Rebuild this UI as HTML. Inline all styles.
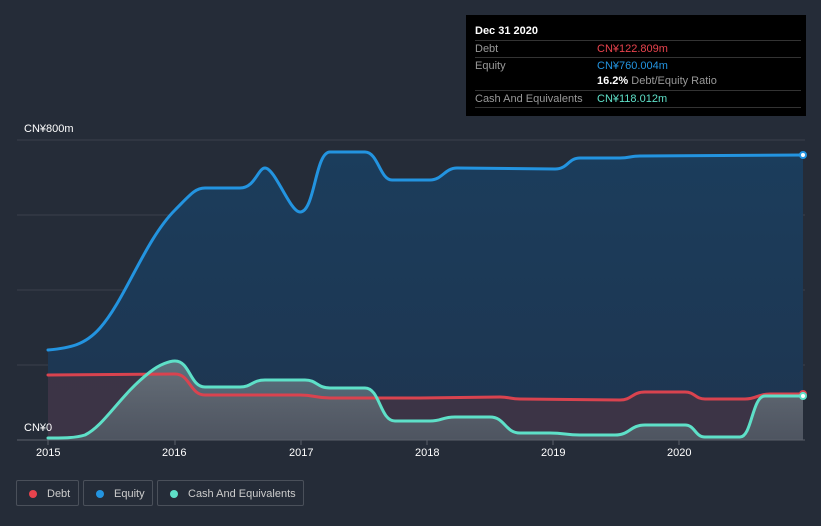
<!DOCTYPE html>
<html><head><style>
body{margin:0;width:821px;height:526px;background:#252c38;font-family:"Liberation Sans",sans-serif;overflow:hidden;position:relative}
.tt{position:absolute;left:466px;top:15px;width:340px;height:101px;background:#000;color:#fff;font-size:11px}
.tt .h{position:absolute;left:9px;top:10px;font-weight:bold}
.row{position:absolute;left:9px;width:326px;border-top:1px solid #333;color:#999}
.row span{position:absolute;left:122px}
.lg{position:absolute;top:480px;height:26px;border:1px solid #4a505a;border-radius:2px;color:#ccc;font-size:11px;line-height:26px;box-sizing:border-box}
.lg i{display:inline-block;width:8px;height:8px;border-radius:50%;margin:0 10px 0 12px;vertical-align:-1px}
.ax{position:absolute;color:#fff;font-size:11px}
</style></head><body>
<svg width="821" height="526" style="position:absolute;left:0;top:0">
<defs>
<linearGradient id="ge" x1="0" y1="0" x2="0" y2="1"><stop offset="0" stop-color="#1b3d5c"/><stop offset="1" stop-color="#1e3550"/></linearGradient>
<linearGradient id="gc" x1="0" y1="0" x2="0" y2="1"><stop offset="0" stop-color="#7a8a90" stop-opacity=".7"/><stop offset="1" stop-color="#5a6a72" stop-opacity=".6"/></linearGradient>
</defs>
<g stroke="#3a414c" stroke-width="1">
<line x1="17" y1="140" x2="805" y2="140"/><line x1="17" y1="215" x2="805" y2="215"/><line x1="17" y1="290" x2="805" y2="290"/><line x1="17" y1="365" x2="805" y2="365"/>
</g>
<path fill="url(#ge)" d="M48,350 C70,348 85,345 100,328 C125,300 145,240 175,210 C190,195 195,188 205,188 L240,188 C255,188 258,168 265,168 C275,168 290,212 300,212 C315,212 315,152 330,152 L365,152 C378,152 380,180 392,180 L430,180 C442,180 445,168 457,168 L555,169 C568,169 568,158 580,158 L620,158 C630,158 630,156 640,156 L803,155 L803,440 L48,440 Z"/>
<path fill="#3f3445" opacity=".9" d="M48,375 L175,374 C190,374 190,395 205,395 L300,395 C315,395 315,398 330,398 L420,398 L500,397 C510,397 510,399 520,399 L620,400 C632,400 632,392 645,392 L685,392 C695,392 695,399 705,399 L745,399 C757,399 757,394 770,394 L803,394 L803,440 L48,440 Z"/>
<path fill="url(#gc)" d="M48,438 C65,438 75,438 85,435 C105,425 120,395 150,372 C160,364 170,361 175,361 C190,361 190,387 205,387 L240,387 C252,387 252,380 265,380 L305,380 C317,380 317,388 330,388 L365,388 C380,388 380,421 395,421 L430,421 C442,421 442,417 455,417 L490,417 C505,417 505,433 520,433 L550,433 C565,433 565,435 580,435 L615,435 C630,435 630,425 645,425 L685,425 C695,425 695,437 705,437 L740,437 C752,437 752,396 765,396 L803,396 L803,440 L48,440 Z"/>
<g fill="none" stroke-width="3" stroke-linejoin="round" stroke-linecap="round">
<path stroke="#2394e0" d="M48,350 C70,348 85,345 100,328 C125,300 145,240 175,210 C190,195 195,188 205,188 L240,188 C255,188 258,168 265,168 C275,168 290,212 300,212 C315,212 315,152 330,152 L365,152 C378,152 380,180 392,180 L430,180 C442,180 445,168 457,168 L555,169 C568,169 568,158 580,158 L620,158 C630,158 630,156 640,156 L803,155"/>
<path stroke="#d9434f" d="M48,375 L175,374 C190,374 190,395 205,395 L300,395 C315,395 315,398 330,398 L420,398 L500,397 C510,397 510,399 520,399 L620,400 C632,400 632,392 645,392 L685,392 C695,392 695,399 705,399 L745,399 C757,399 757,394 770,394 L803,394"/>
<path stroke="#5ee0c8" d="M48,438 C65,438 75,438 85,435 C105,425 120,395 150,372 C160,364 170,361 175,361 C190,361 190,387 205,387 L240,387 C252,387 252,380 265,380 L305,380 C317,380 317,388 330,388 L365,388 C380,388 380,421 395,421 L430,421 C442,421 442,417 455,417 L490,417 C505,417 505,433 520,433 L550,433 C565,433 565,435 580,435 L615,435 C630,435 630,425 645,425 L685,425 C695,425 695,437 705,437 L740,437 C752,437 752,396 765,396 L803,396"/>
</g>
<line x1="17" y1="440" x2="805" y2="440" stroke="#5a606a"/>
<g stroke="#5a606a"><line x1="48" y1="440" x2="48" y2="445"/><line x1="175" y1="440" x2="175" y2="445"/><line x1="301" y1="440" x2="301" y2="445"/><line x1="427" y1="440" x2="427" y2="445"/><line x1="553" y1="440" x2="553" y2="445"/><line x1="679" y1="440" x2="679" y2="445"/></g>
<circle cx="803" cy="155" r="3" fill="#fff" stroke="#2394e0" stroke-width="2"/>
<circle cx="803" cy="394" r="3" fill="#fff" stroke="#d9434f" stroke-width="2"/>
<circle cx="803" cy="396" r="3" fill="#fff" stroke="#5ee0c8" stroke-width="2"/>
</svg>
<div class="ax" style="left:24px;top:123px">CN¥800m</div>
<div class="ax" style="left:24px;top:422px">CN¥0</div>
<div class="ax" style="left:36px;top:447px">2015</div>
<div class="ax" style="left:162px;top:447px">2016</div>
<div class="ax" style="left:289px;top:447px">2017</div>
<div class="ax" style="left:415px;top:447px">2018</div>
<div class="ax" style="left:541px;top:447px">2019</div>
<div class="ax" style="left:667px;top:447px">2020</div>
<div class="tt">
<div class="h">Dec 31 2020</div>
<div class="row" style="top:25px;height:17px;line-height:17px">Debt<span style="color:#e8434d">CN¥122.809m</span></div>
<div class="row" style="top:42px;height:17px;line-height:17px">Equity<span style="color:#2394e0">CN¥760.004m</span></div>
<div class="row" style="top:59px;border:none;line-height:15px"><span style="color:#999"><b style="color:#fff">16.2%</b> Debt/Equity Ratio</span></div>
<div class="row" style="top:75px;height:17px;line-height:17px">Cash And Equivalents<span style="color:#5ee0c8">CN¥118.012m</span></div>
<div class="row" style="top:92px"></div>
</div>
<div class="lg" style="left:16px;width:63px"><i style="background:#e8434d"></i>Debt</div>
<div class="lg" style="left:83px;width:70px"><i style="background:#2394e0"></i>Equity</div>
<div class="lg" style="left:157px;width:147px"><i style="background:#5ee0c8"></i>Cash And Equivalents</div>
</body></html>
